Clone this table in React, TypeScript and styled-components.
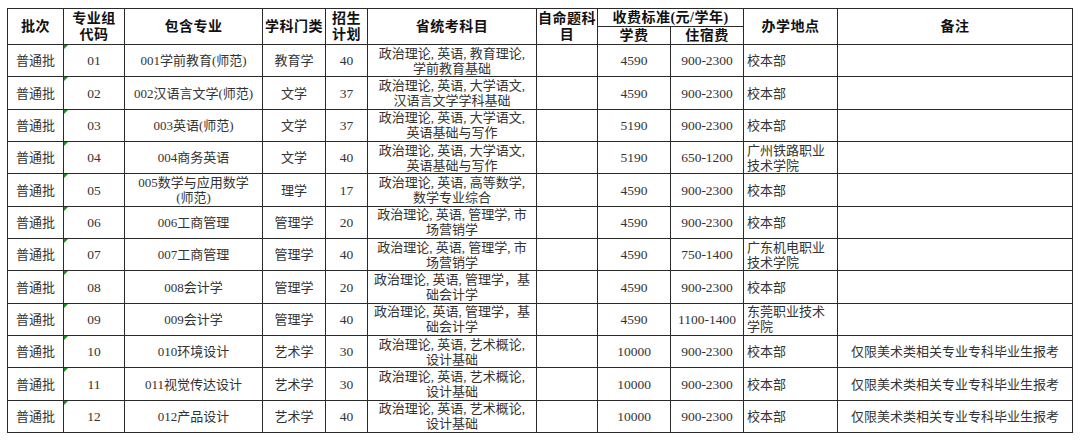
import styled, { createGlobalStyle } from 'styled-components'

const GlobalStyle = createGlobalStyle`
  html, body {
    margin: 0;
    padding: 0;
    background: #fff;
  }
`

type Row = {
  code: string
  major: string[]
  category: string
  plan: number
  exams: string[]
  fee: number
  dorm: string
  place: string[]
  note?: string
}

const rows: Row[] = [
  { code: '01', major: ['001学前教育(师范)'], category: '教育学', plan: 40, exams: ['政治理论, 英语, 教育理论,', '学前教育基础'], fee: 4590, dorm: '900-2300', place: ['校本部'] },
  { code: '02', major: ['002汉语言文学(师范)'], category: '文学', plan: 37, exams: ['政治理论, 英语, 大学语文,', '汉语言文学学科基础'], fee: 4590, dorm: '900-2300', place: ['校本部'] },
  { code: '03', major: ['003英语(师范)'], category: '文学', plan: 37, exams: ['政治理论, 英语, 大学语文,', '英语基础与写作'], fee: 5190, dorm: '900-2300', place: ['校本部'] },
  { code: '04', major: ['004商务英语'], category: '文学', plan: 40, exams: ['政治理论, 英语, 大学语文,', '英语基础与写作'], fee: 5190, dorm: '650-1200', place: ['广州铁路职业', '技术学院'] },
  { code: '05', major: ['005数学与应用数学', '(师范)'], category: '理学', plan: 17, exams: ['政治理论, 英语, 高等数学,', '数学专业综合'], fee: 4590, dorm: '900-2300', place: ['校本部'] },
  { code: '06', major: ['006工商管理'], category: '管理学', plan: 20, exams: ['政治理论, 英语, 管理学, 市', '场营销学'], fee: 4590, dorm: '900-2300', place: ['校本部'] },
  { code: '07', major: ['007工商管理'], category: '管理学', plan: 40, exams: ['政治理论, 英语, 管理学, 市', '场营销学'], fee: 4590, dorm: '750-1400', place: ['广东机电职业', '技术学院'] },
  { code: '08', major: ['008会计学'], category: '管理学', plan: 20, exams: ['政治理论, 英语, 管理学，基', '础会计学'], fee: 4590, dorm: '900-2300', place: ['校本部'] },
  { code: '09', major: ['009会计学'], category: '管理学', plan: 40, exams: ['政治理论, 英语, 管理学，基', '础会计学'], fee: 4590, dorm: '1100-1400', place: ['东莞职业技术', '学院'] },
  { code: '10', major: ['010环境设计'], category: '艺术学', plan: 30, exams: ['政治理论, 英语, 艺术概论,', '设计基础'], fee: 10000, dorm: '900-2300', place: ['校本部'], note: '仅限美术类相关专业专科毕业生报考' },
  { code: '11', major: ['011视觉传达设计'], category: '艺术学', plan: 30, exams: ['政治理论, 英语, 艺术概论,', '设计基础'], fee: 10000, dorm: '900-2300', place: ['校本部'], note: '仅限美术类相关专业专科毕业生报考' },
  { code: '12', major: ['012产品设计'], category: '艺术学', plan: 40, exams: ['政治理论, 英语, 艺术概论,', '设计基础'], fee: 10000, dorm: '900-2300', place: ['校本部'], note: '仅限美术类相关专业专科毕业生报考' },
]

const widths = [56, 61, 138, 63, 42, 169, 61, 73, 73, 94, 235]

const Sheet = styled.table`
  margin: 8px 0 0 7px;
  width: 1065px;
  border-collapse: collapse;
  table-layout: fixed;
  font-family: 'Liberation Serif', 'Noto Sans CJK SC', serif;
  font-size: 13px;
  color: #333;
`

const Head = styled.th<{ $h?: number }>`
  border: 1px solid #2a2a2a;
  padding: 0 1px;
  height: ${(p) => p.$h ?? 17}px;
  font-weight: 700;
  font-size: 14px;
  line-height: 16px;
  color: #111;
  text-align: center;
  vertical-align: middle;
  letter-spacing: 0.5px;
`

const BodyRow = styled.tr`
  height: 32.35px;
`

const Cell = styled.td<{ $align?: 'left' | 'center'; $flag?: boolean; $num?: boolean }>`
  position: relative;
  border: 1px solid #2a2a2a;
  padding: ${(p) => (p.$align === 'left' ? '0 0 0 3px' : '0 1px')};
  text-align: ${(p) => p.$align ?? 'center'};
  vertical-align: middle;
  line-height: 15px;
  font-size: ${(p) => (p.$num ? '13.5px' : '13px')};
  white-space: nowrap;
  overflow: hidden;

  ${(p) =>
    p.$flag &&
    `
    &::before {
      content: '';
      position: absolute;
      top: 0;
      left: 0;
      border-top: 4px solid #1e8c1e;
      border-right: 4px solid transparent;
    }
  `}
`

const Lines = ({ parts }: { parts: string[] }) => (
  <>
    {parts.map((p, i) => (
      <div key={i}>{p}</div>
    ))}
  </>
)

export default function App() {
  return (
    <>
      <GlobalStyle />
      <Sheet>
        <colgroup>
          {widths.map((w, i) => (
            <col key={i} style={{ width: w }} />
          ))}
        </colgroup>
        <thead>
          <tr>
            <Head rowSpan={2}>批次</Head>
            <Head rowSpan={2}>
              专业组
              <br />
              代码
            </Head>
            <Head rowSpan={2}>包含专业</Head>
            <Head rowSpan={2}>学科门类</Head>
            <Head rowSpan={2}>
              招生
              <br />
              计划
            </Head>
            <Head rowSpan={2}>省统考科目</Head>
            <Head rowSpan={2}>
              自命题科
              <br />目
            </Head>
            <Head colSpan={2}>收费标准(元/学年)</Head>
            <Head rowSpan={2}>办学地点</Head>
            <Head rowSpan={2}>备注</Head>
          </tr>
          <tr>
            <Head>学费</Head>
            <Head>住宿费</Head>
          </tr>
        </thead>
        <tbody>
          {rows.map((r) => (
            <BodyRow key={r.code}>
              <Cell>普通批</Cell>
              <Cell $flag $num>{r.code}</Cell>
              <Cell>
                <Lines parts={r.major} />
              </Cell>
              <Cell>{r.category}</Cell>
              <Cell $num>{r.plan}</Cell>
              <Cell>
                <Lines parts={r.exams} />
              </Cell>
              <Cell />
              <Cell $num>{r.fee}</Cell>
              <Cell $num>{r.dorm}</Cell>
              <Cell $align="left">
                <Lines parts={r.place} />
              </Cell>
              <Cell>{r.note}</Cell>
            </BodyRow>
          ))}
        </tbody>
      </Sheet>
    </>
  )
}
